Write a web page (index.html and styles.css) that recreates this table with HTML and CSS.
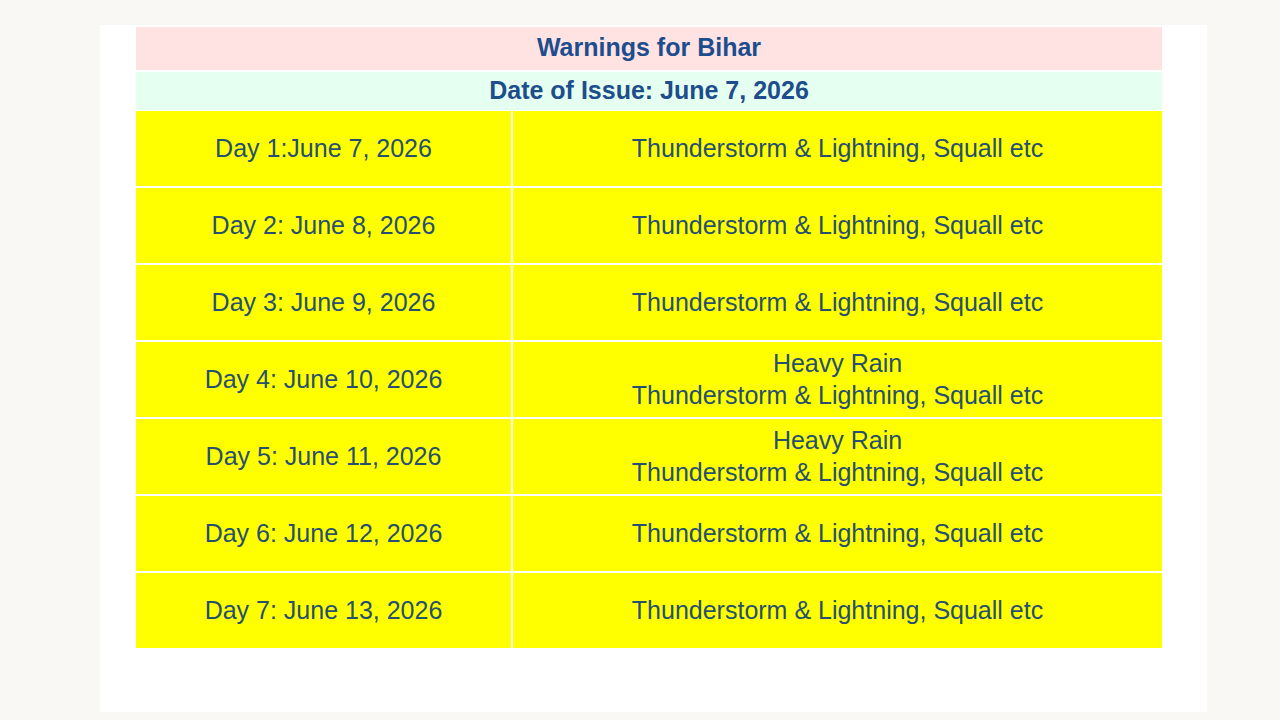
FILE: index.html
```html
<!DOCTYPE html>
<html lang="en">
<head>
<meta charset="utf-8">
<title>Warnings for Bihar</title>
<link rel="stylesheet" href="styles.css">
</head>
<body>
<div class="card">
  <div class="warn-table">
    <div class="title">Warnings for Bihar</div>
    <div class="issue">Date of Issue: June 7, 2026</div>
    <div class="row"><div class="day">Day 1:June 7, 2026</div><div class="desc">Thunderstorm &amp; Lightning, Squall etc</div></div>
    <div class="row"><div class="day">Day 2: June 8, 2026</div><div class="desc">Thunderstorm &amp; Lightning, Squall etc</div></div>
    <div class="row"><div class="day">Day 3: June 9, 2026</div><div class="desc">Thunderstorm &amp; Lightning, Squall etc</div></div>
    <div class="row"><div class="day">Day 4: June 10, 2026</div><div class="desc">Heavy Rain<br>Thunderstorm &amp; Lightning, Squall etc</div></div>
    <div class="row"><div class="day">Day 5: June 11, 2026</div><div class="desc">Heavy Rain<br>Thunderstorm &amp; Lightning, Squall etc</div></div>
    <div class="row"><div class="day">Day 6: June 12, 2026</div><div class="desc">Thunderstorm &amp; Lightning, Squall etc</div></div>
    <div class="row"><div class="day">Day 7: June 13, 2026</div><div class="desc">Thunderstorm &amp; Lightning, Squall etc</div></div>
  </div>
</div>
</body>
</html>
```

FILE: styles.css
```css
html, body {
  margin: 0;
  padding: 0;
  background: #f9f8f5;
  font-family: "Liberation Sans", Arial, sans-serif;
}
.card {
  margin: 25px 0 0 100px;
  width: 1107px;
  height: 687px;
  background: #ffffff;
  padding: 2px 0 0 36px;
  box-sizing: border-box;
}
.warn-table {
  width: 1026px;
  display: flex;
  flex-direction: column;
  gap: 2px;
}
.title, .issue {
  display: flex;
  align-items: center;
  justify-content: center;
  font-weight: bold;
  color: #1d4d8c;
  font-size: 25px;
  box-sizing: border-box;
}
.title {
  height: 43px;
  background: #ffe3e3;
  padding-bottom: 2px;
}
.issue {
  height: 38px;
  background: #e5fff0;
  margin-bottom: -1px;
  padding-bottom: 2px;
}
.row {
  display: grid;
  grid-template-columns: 375px 1fr;
  gap: 2px;
  height: 75px;
}
.day, .desc {
  background: #ffff00;
  display: flex;
  align-items: center;
  justify-content: center;
  text-align: center;
  color: #274f70;
  font-size: 25px;
  line-height: 32px;
  padding-bottom: 2px;
  box-sizing: border-box;
}
```
